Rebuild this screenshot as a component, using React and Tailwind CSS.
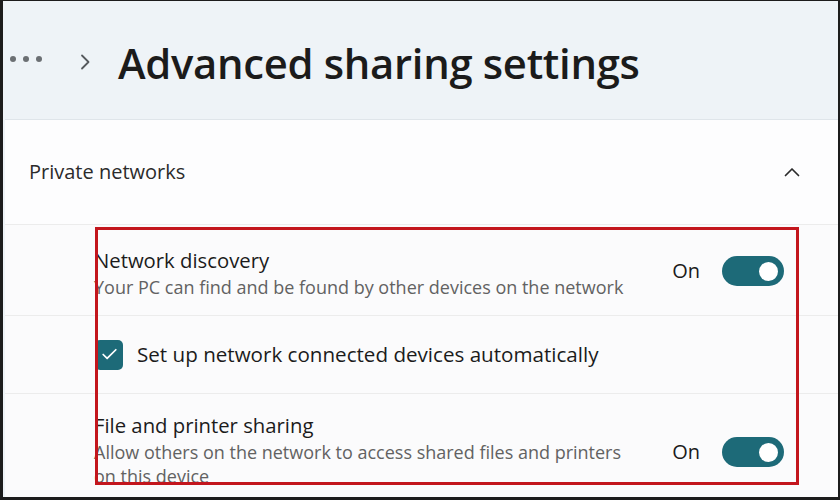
import { Check } from "lucide-react";

const font = { fontFamily: '"Open Sans", "Noto Sans", sans-serif' };

function Toggle() {
  return (
    <div className="flex items-center gap-[22px]">
      <span className="text-[20px] text-[#1b1b1b]">On</span>
      <div className="w-[62px] h-[30px] rounded-full bg-[#1d6a78] flex items-center justify-end pr-[6px]">
        <div className="w-[19px] h-[19px] rounded-full bg-white" />
      </div>
    </div>
  );
}

export default function App() {
  return (
    <div
      style={font}
      className="relative w-[840px] h-[500px] overflow-hidden bg-[#eef3f7] border-l-[3px] border-r-2 border-t border-b-[3px] border-[#1c1c1c]"
    >
      {/* breadcrumb header */}
      <div className="h-[118px] flex items-center pb-[2px]">
        <div className="flex items-center gap-[7px] ml-[7px]">
          <span className="w-[6px] h-[6px] rounded-full bg-[#6b6f73]" />
          <span className="w-[6px] h-[6px] rounded-full bg-[#6b6f73]" />
          <span className="w-[6px] h-[6px] rounded-full bg-[#6b6f73]" />
        </div>
        <svg width="14" height="20" viewBox="0 0 14 20" className="ml-[36px] mt-[6px]" fill="none">
          <path d="M4 3.5l6.5 6.5-6.5 6.5" stroke="#55595d" strokeWidth="1.8" strokeLinecap="round" strokeLinejoin="round" />
        </svg>
        <h1 className="ml-[26px] mt-[8px] text-[41.8px] font-semibold text-[#1b1b1b] tracking-[-0.3px] leading-none">
          Advanced sharing settings
        </h1>
      </div>

      {/* card */}
      <div className="ml-[2px] bg-[#fdfdfe] border-t border-[#dfe5ea]">
        <div className="h-[105px] flex items-center justify-between pl-[24px] pr-[38px] border-b border-[#ececec]">
          <span className="text-[20px] text-[#2b2b2b]">Private networks</span>
          <svg width="16" height="10" viewBox="0 0 16 10" fill="none">
            <path d="M1.5 8.5l6.5-6.5 6.5 6.5" stroke="#2b2b2b" strokeWidth="1.7" strokeLinecap="round" strokeLinejoin="round" />
          </svg>
        </div>

        <div className="bg-[#fbfbfc]">
          <div className="h-[91px] flex justify-between pl-[89px] pr-[54px] pt-[22px] border-b border-[#ececec]">
            <div className="flex flex-col">
              <span className="text-[20.3px] text-[#1b1b1b] leading-[26px]">Network discovery</span>
              <span className="text-[18px] text-[#626262] leading-[24px] mt-[2px]">
                Your PC can find and be found by other devices on the network
              </span>
            </div>
            <div className="mt-[9px]">
              <Toggle />
            </div>
          </div>

          <div className="h-[78px] flex items-center gap-[14px] pl-[90px] border-b border-[#ececec]">
            <div className="w-[28px] h-[30px] rounded-[5px] bg-[#1d6a78] flex items-center justify-center">
              <Check size={19} color="white" strokeWidth={2.2} />
            </div>
            <span className="text-[20.6px] text-[#1b1b1b]">Set up network connected devices automatically</span>
          </div>

          <div className="h-[110px] flex justify-between pl-[89px] pr-[54px] pt-[18px]">
            <div className="flex flex-col">
              <span className="text-[20.3px] text-[#1b1b1b] leading-[26px]">File and printer sharing</span>
              <span className="text-[18px] text-[#626262] leading-[24px] w-[535px] mt-[2px]">
                Allow others on the network to access shared files and printers on this device
              </span>
            </div>
            <div className="mt-[25px]">
              <Toggle />
            </div>
          </div>
        </div>
      </div>

      {/* red annotation box */}
      <div className="absolute left-[92px] top-[226px] w-[704px] h-[258px] border-[3px] border-[#c3161d] pointer-events-none" />
    </div>
  );
}
